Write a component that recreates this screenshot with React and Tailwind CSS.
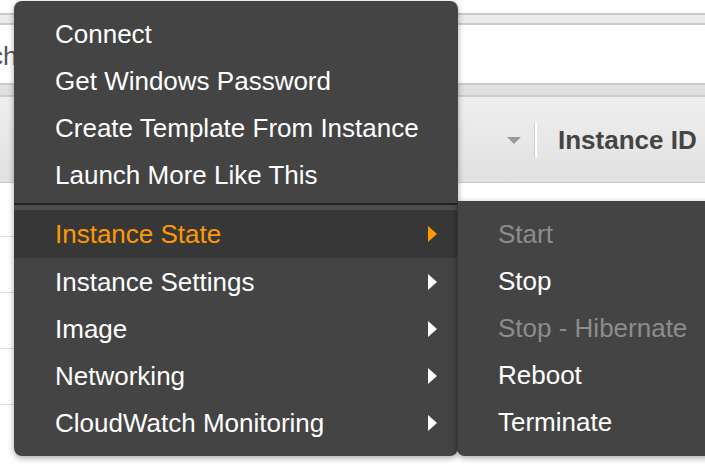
import React from "react";

const mainItems1 = ["Connect", "Get Windows Password", "Create Template From Instance", "Launch More Like This"];
const mainItems2 = ["Instance Settings", "Image", "Networking", "CloudWatch Monitoring"];
const subItems = [
  { label: "Start", disabled: true },
  { label: "Stop", disabled: false },
  { label: "Stop - Hibernate", disabled: true },
  { label: "Reboot", disabled: false },
  { label: "Terminate", disabled: false },
];

function Arrow({ orange }) {
  return (
    <span
      className={
        "block w-0 h-0 border-y-[8px] border-y-transparent border-l-[9px] " +
        (orange ? "border-l-[#ff9900]" : "border-l-white")
      }
    />
  );
}

export default function App() {
  return (
    <div
      className="relative w-[705px] h-[469px] overflow-hidden bg-white"
      style={{ fontFamily: '"Liberation Sans", Arial, sans-serif' }}
    >
      {/* background page */}
      <div className="flex flex-col">
        <div className="h-[13px] bg-white" />
        <div className="h-[2px] bg-[#cacaca]" />
        <div className="h-[8px] bg-[#ebebeb]" />
        <div className="h-[2px] bg-[#cacaca]" />
        <div className="h-[58px] bg-white flex items-center">
          <span className="ml-[-65px] text-[26px] text-[#555] leading-none pt-[3px]">Search</span>
        </div>
        <div className="h-[2px] bg-[#cacaca]" />
        <div className="h-[10px] bg-[#e0e0e0]" />
        <div className="h-[2px] bg-[#cacaca]" />
        <div className="h-[85px] bg-gradient-to-b from-[#efefef] to-[#e1e1e1] flex items-center pl-[507px]">
          <span className="block w-0 h-0 border-x-[7px] border-x-transparent border-t-[7px] border-t-[#9a9a9a] mt-[2px]" />
          <span className="ml-[13px] flex h-[36px] mt-[1px]">
            <span className="w-[1px] bg-[#cfcfcf]" />
            <span className="w-[2px] bg-white" />
          </span>
          <span className="ml-[21px] text-[26px] font-bold text-[#444] leading-none mt-[1px]">Instance ID</span>
        </div>
        <div className="h-[1px] bg-[#cacaca]" />
        <div className="h-[54px] bg-white border-b border-[#dedede] flex items-end pl-[557px]">
          <span className="text-[26px] text-[#333] leading-none mb-[6px]">i-0f74d9c35</span>
        </div>
        <div className="h-[56px] bg-white border-b border-[#dedede]" />
        <div className="h-[56px] bg-white border-b border-[#dedede]" />
        <div className="h-[56px] bg-white border-b border-[#dedede]" />
        <div className="h-[56px] bg-white" />
        <div className="flex-1 h-[10px] bg-[#e9eef5]" />
      </div>

      {/* context menu */}
      <div className="absolute left-[14px] top-[1px] w-[444px] rounded-[8px] bg-[#444444] shadow-[0_2px_6px_rgba(0,0,0,0.35)] pt-[9px] pb-[10px] text-[26px] text-white leading-none">
        {mainItems1.map((t) => (
          <div key={t} className="h-[47px] flex items-center pl-[41px]">
            {t}
          </div>
        ))}
        <div className="mt-[5px] h-[2px] bg-[#232323]" />
        <div className="h-[5px] bg-[#4d4d4d]" />
        <div className="h-[48px] flex items-center justify-between pl-[41px] pr-[21px] bg-[#373737] text-[#ff9900]">
          <span>Instance State</span>
          <Arrow orange />
        </div>
        {mainItems2.map((t) => (
          <div key={t} className="h-[47px] flex items-center justify-between pl-[41px] pr-[21px]">
            <span>{t}</span>
            <Arrow />
          </div>
        ))}
      </div>

      {/* submenu */}
      <div className="absolute left-[457px] top-[201px] w-[260px] h-[255px] bg-[#444444] border-l border-[#333333] rounded-bl-[8px] shadow-[0_2px_6px_rgba(0,0,0,0.35)] pt-[9px] text-[26px] leading-none">
        {subItems.map((s) => (
          <div
            key={s.label}
            className={
              "h-[47px] flex items-center pl-[40px] " + (s.disabled ? "text-[#8c8c8c]" : "text-white")
            }
          >
            {s.label}
          </div>
        ))}
      </div>
    </div>
  );
}
